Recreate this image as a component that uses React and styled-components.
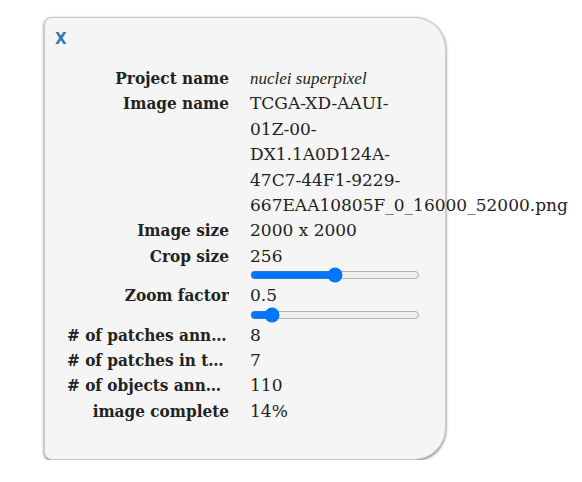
import React from "react";
import styled, { createGlobalStyle } from "styled-components";

const GlobalStyle = createGlobalStyle`
  body {
    margin: 0;
    background: #ffffff;
    font-family: "DejaVu Serif", serif;
  }
`;

const Page = styled.div`
  padding: 17px 0 0 44px;
`;

const Panel = styled.div`
  box-sizing: border-box;
  width: 402px;
  height: 443px;
  background: #f5f5f5;
  border: 1px solid #c8c8c8;
  border-radius: 8px 32px 32px 8px;
  box-shadow: 0 1px 3px rgba(0, 0, 0, 0.55);
  padding: 11px 0 0 10px;
`;

const Close = styled.div`
  font-family: "DejaVu Sans", sans-serif;
  font-weight: 700;
  font-size: 15px;
  color: #337ab7;
  line-height: 20px;
  cursor: pointer;
`;

const Table = styled.div`
  display: grid;
  grid-template-columns: 162px 170px;
  column-gap: 21px;
  margin: 17px 0 0 12px;
  font-size: 17px;
  line-height: 25.4px;
  color: #222;
`;

const Label = styled.div`
  font-weight: 700;
  font-stretch: condensed;
  text-align: right;
  white-space: nowrap;
  overflow: hidden;
  text-overflow: ellipsis;
`;

const Value = styled.div`
  font-family: ${(p) => (p.$italic ? '"Liberation Serif", serif' : '"DejaVu Serif", serif')};
  font-style: ${(p) => (p.$italic ? "italic" : "normal")};
`;

const Slider = styled.input`
  display: block;
  width: 170px;
  height: 16px;
  margin: -2px 0 0;
  accent-color: #0075ff;
`;

const rows = [
  ["# of patches annotated", "8"],
  ["# of patches in training", "7"],
  ["# of objects annotated", "110"],
  ["image complete", "14%"],
];

export default function App() {
  return (
    <>
      <GlobalStyle />
      <Page>
        <Panel>
          <Close>X</Close>
          <Table>
            <Label>Project name</Label>
            <Value $italic>nuclei superpixel</Value>
            <Label>Image name</Label>
            <Value>
              TCGA-XD-AAUI-01Z-00-DX1.1A0D124A-47C7-44F1-9229-667EAA10805F_0_16000_52000.png
            </Value>
            <Label>Image size</Label>
            <Value>2000 x 2000</Value>
            <Label>Crop size</Label>
            <Value>
              256
              <Slider type="range" min={0} max={512} defaultValue={256} />
            </Value>
            <Label>Zoom factor</Label>
            <Value>
              0.5
              <Slider type="range" min={0.25} max={3} step={0.05} defaultValue={0.5} />
            </Value>
            {rows.map(([k, v]) => (
              <React.Fragment key={k}>
                <Label>{k}</Label>
                <Value>{v}</Value>
              </React.Fragment>
            ))}
          </Table>
        </Panel>
      </Page>
    </>
  );
}
